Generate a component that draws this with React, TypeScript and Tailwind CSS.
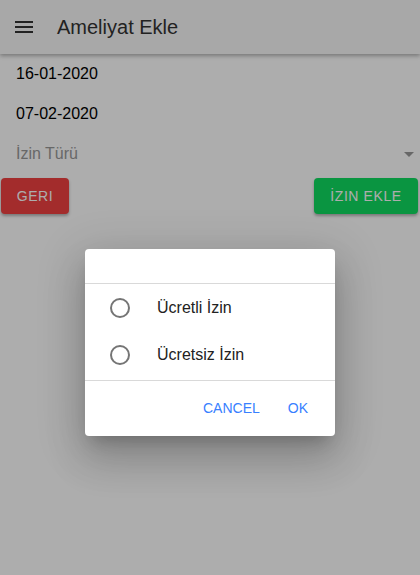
import { useState } from "react";

const options = ["Ücretli İzin", "Ücretsiz İzin"];

function MenuIcon() {
  return (
    <svg width="24" height="24" viewBox="0 0 24 24" className="text-[#333]">
      <path d="M3 18h18v-2H3v2zm0-5h18v-2H3v2zm0-7v2h18V6H3z" fill="currentColor" />
    </svg>
  );
}

export default function App() {
  const [selected, setSelected] = useState<number | null>(null);

  return (
    <div className="relative w-[420px] h-[575px] overflow-hidden bg-white font-['Liberation_Sans',Arial,sans-serif]">
      <header className="h-[54px] bg-[#f8f8f8] flex items-center px-3 gap-[21px] shadow-[0_2px_4px_rgba(0,0,0,0.3)] relative">
        <MenuIcon />
        <h1 className="text-[20px] text-[#333]">Ameliyat Ekle</h1>
      </header>

      <div className="flex flex-col">
        <div className="h-[40px] flex items-center px-4 text-[16px] text-black">16-01-2020</div>
        <div className="h-[40px] flex items-center px-4 text-[16px] text-black">07-02-2020</div>
        <div className="h-[40px] flex items-center justify-between pl-4 pr-[6px] text-[16px] text-[#999]">
          <span>İzin Türü</span>
          <span className="w-0 h-0 border-l-[5px] border-r-[5px] border-t-[5px] border-l-transparent border-r-transparent border-t-[#999]" />
        </div>
        <div className="flex justify-between px-[1px] pt-[4px]">
          <button className="h-[36px] w-[68px] rounded-[4px] bg-[#f04141] text-white text-[14px] tracking-[0.6px] shadow-[0_2px_3px_rgba(0,0,0,0.3)]">GERI</button>
          <button className="h-[36px] w-[104px] mr-[1px] rounded-[4px] bg-[#10dc60] text-white text-[14px] tracking-[0.6px] shadow-[0_2px_3px_rgba(0,0,0,0.3)]">İZIN EKLE</button>
        </div>
      </div>

      <div className="absolute inset-0 bg-black/[0.32] flex items-center justify-center">
        <div className="w-[250px] mt-[109px] bg-white rounded-[4px] shadow-[0_11px_15px_-7px_rgba(0,0,0,0.2),0_24px_38px_3px_rgba(0,0,0,0.14),0_9px_46px_8px_rgba(0,0,0,0.12)]">
          <div className="h-[35px] border-b border-[#d9d9d9]" />
          <div className="flex flex-col py-[1px]">
            {options.map((o, i) => (
              <button
                key={o}
                onClick={() => setSelected(i)}
                className="h-[47px] flex items-center pl-[25px] text-left"
              >
                <span className="w-[20px] h-[20px] rounded-full border-2 border-[#757575] flex items-center justify-center">
                  {selected === i && <span className="w-[10px] h-[10px] rounded-full bg-[#3880ff]" />}
                </span>
                <span className="ml-[27px] text-[16px] text-[#222]">{o}</span>
              </button>
            ))}
          </div>
          <div className="border-t border-[#d9d9d9] flex justify-end items-center h-[56px] pr-[27px] gap-[28px]">
            <button className="text-[14px] text-[#3880ff]">CANCEL</button>
            <button className="text-[14px] text-[#3880ff]">OK</button>
          </div>
        </div>
      </div>
    </div>
  );
}
